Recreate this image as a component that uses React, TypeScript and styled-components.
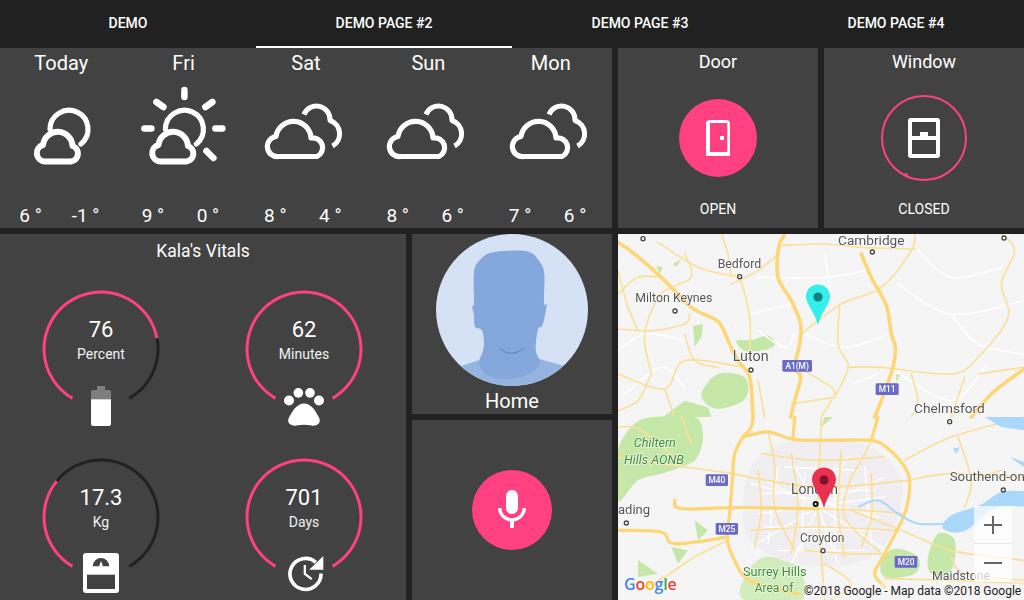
import React from "react";
import styled, { createGlobalStyle } from "styled-components";

const Global = createGlobalStyle`
  html, body { margin: 0; padding: 0; background: #212121; }
  body { font-family: Roboto, "Liberation Sans", sans-serif; color: #fff; width: 1024px; height: 600px; overflow: hidden; }
  * { box-sizing: border-box; }
`;

const PINK = "#ff4081";
const PANEL = "#424242";
const DARK = "#212121";

const Page = styled.div`
  width: 1024px;
  height: 600px;
  display: flex;
  flex-direction: column;
  background: ${DARK};
  overflow: hidden;
`;
const TabBar = styled.nav`
  height: 48px;
  display: grid;
  grid-template-columns: repeat(4, 256px);
  flex: none;
`;
const Tab = styled.div<{ $active?: boolean }>`
  display: flex;
  align-items: center;
  justify-content: center;
  font-size: 14px;
  font-weight: 500;
  color: #fff;
  text-transform: uppercase;
  border-bottom: 2px solid ${(p) => (p.$active ? "#fff" : "transparent")};
`;
const Grid = styled.main`
  flex: 1;
  display: grid;
  grid-template-columns: 406px 200px 200px 200px;
  grid-template-rows: 180px 180px 180px;
  gap: 6px;
`;
const Panel = styled.section`
  background: ${PANEL};
  overflow: hidden;
`;
const WeatherPanel = styled(Panel)`
  grid-column: 1 / 3;
  display: grid;
  grid-template-columns: repeat(5, 122.4px);
`;
const Day = styled.div`
  display: flex;
  flex-direction: column;
  align-items: center;
`;
const DayName = styled.div`
  height: 30px;
  line-height: 30px;
  font-size: 20px;
  font-weight: 400;
`;
const WeatherIcon = styled.svg`
  width: 90px;
  height: 84px;
  margin-top: 6px;
  display: block;
`;
const Temps = styled.div`
  align-self: stretch;
  display: flex;
  padding-left: 3px;
  margin-top: 36px;
`;
const Temp = styled.span`
  width: 55px;
  text-align: center;
  line-height: 24px;
  font-size: 19px;
  font-weight: 400;
`;
const SwitchPanel = styled(Panel)`
  display: flex;
  flex-direction: column;
  align-items: center;
`;
const SwitchTitle = styled.div`
  height: 28px;
  line-height: 28px;
  font-size: 18px;
  font-weight: 400;
`;
const SwitchButton = styled.div<{ $on?: boolean }>`
  width: ${(p) => (p.$on ? 78 : 86)}px;
  height: ${(p) => (p.$on ? 78 : 86)}px;
  margin-top: ${(p) => (p.$on ? 23 : 19)}px;
  margin-bottom: ${(p) => (p.$on ? 22 : 18)}px;
  border-radius: 50%;
  display: flex;
  align-items: center;
  justify-content: center;
  position: relative;
  background: ${(p) => (p.$on ? PINK : "transparent")};
  border: ${(p) => (p.$on ? "none" : `2px solid ${PINK}`)};
`;
const RingNub = styled.span`
  position: absolute;
  left: 21px;
  bottom: 2px;
  width: 4px;
  height: 4px;
  border-radius: 50%;
  background: ${PINK};
`;
const SwitchState = styled.div`
  height: 20px;
  line-height: 20px;
  font-size: 14px;
  font-weight: 400;
  text-transform: uppercase;
`;
const VitalsPanel = styled(Panel)`
  grid-column: 1;
  grid-row: 2 / 4;
  display: flex;
  flex-direction: column;
`;
const VitalsTitle = styled.div`
  height: 34px;
  line-height: 34px;
  text-align: center;
  font-size: 17.5px;
  font-weight: 400;
`;
const GaugeGrid = styled.div`
  display: grid;
  grid-template-columns: 120px 120px;
  column-gap: 83px;
  row-gap: 48px;
  padding: 21px 0 0 41px;
`;
const Gauge = styled.div`
  display: grid;
  width: 120px;
  height: 120px;
  position: relative;
`;
const GaugeArc = styled.svg`
  grid-area: 1 / 1;
  width: 120px;
  height: 120px;
  display: block;
`;
const GaugeText = styled.div`
  grid-area: 1 / 1;
  display: flex;
  flex-direction: column;
  align-items: center;
  padding-top: 27px;
`;
const GaugeValue = styled.div`
  font-size: 22px;
  line-height: 28px;
  font-weight: 400;
`;
const GaugeUnit = styled.div`
  font-size: 14px;
  line-height: 20px;
  font-weight: 400;
  color: #f2f2f2;
`;
const GaugeIcon = styled.svg<{ $x: number; $y: number }>`
  position: absolute;
  left: ${(p) => p.$x}px;
  top: ${(p) => p.$y}px;
  display: block;
`;
const HomePanel = styled(Panel)`
  display: flex;
  flex-direction: column;
  align-items: center;
`;
const Avatar = styled.svg`
  width: 152px;
  height: 152px;
  display: block;
  flex: none;
`;
const HomeLabel = styled.div`
  font-size: 20px;
  line-height: 30px;
  font-weight: 400;
`;
const MicPanel = styled(Panel)`
  display: flex;
  align-items: center;
  justify-content: center;
`;
const MicButton = styled.div`
  width: 80px;
  height: 80px;
  border-radius: 50%;
  background: ${PINK};
  display: flex;
  align-items: center;
  justify-content: center;
`;
const MapPanel = styled(Panel)`
  grid-column: 3 / 5;
  grid-row: 2 / 4;
  position: relative;
  background: #f6f5f6;
`;
const MapArt = styled.svg`
  width: 406px;
  height: 366px;
  display: block;
  filter: blur(0.4px);
`;
const Pin = styled.svg<{ $x: number; $y: number }>`
  position: absolute;
  left: ${(p) => p.$x}px;
  top: ${(p) => p.$y}px;
  width: 26px;
  height: 41px;
`;
const ZoomControl = styled.div`
  position: absolute;
  left: 356px;
  top: 272px;
  width: 38px;
  height: 76px;
  background: rgba(255, 255, 255, 0.72);
  border-radius: 2px;
  display: grid;
  grid-template-rows: 1fr 1fr;
`;
const ZoomButton = styled.div<{ $top?: boolean }>`
  display: flex;
  align-items: center;
  justify-content: center;
  border-bottom: ${(p) => (p.$top ? "1px solid #e6e6e6" : "none")};
`;
const GoogleLogo = styled.div`
  position: absolute;
  left: 6px;
  bottom: 7px;
  font-family: "Open Sans", "Liberation Sans", sans-serif;
  font-size: 16px;
  line-height: 18px;
  font-weight: 600;
  letter-spacing: -0.2px;
  text-shadow: 0 0 2px #fff;
`;
const Letter = styled.span<{ $c: string }>`
  color: ${(p) => p.$c};
`;
const Attribution = styled.div`
  position: absolute;
  left: 186px;
  bottom: 1px;
  width: 220px;
  overflow: hidden;
  white-space: nowrap;
  font-size: 12px;
  line-height: 16px;
  color: #222;
  background: rgba(245, 245, 245, 0.45);
`;

/* ---------- weather drawings ---------- */
const smallCloud = "M45 161.5A8.4 8.4 0 0 1 43 145A14.8 14.8 0 0 1 72.5 146A8 8 0 0 1 71 161.5Z";
const stroke = { fill: "none", stroke: "#fff", strokeLinecap: "round" as const, strokeLinejoin: "round" as const };

const SunAndCloud = () => (
  <>
    <path d="M50 129A19 19 0 1 1 81 144" {...stroke} strokeWidth={5.2} />
    <path d={smallCloud} {...stroke} strokeWidth={6} />
  </>
);
const PartlyCloudy = () => (
  <WeatherIcon viewBox="16 84 90 84">
    <SunAndCloud />
  </WeatherIcon>
);
const SunCloud = () => (
  <WeatherIcon viewBox="23.6 84 90 84">
    <SunAndCloud />
    <g {...stroke} strokeWidth={6.5}>
      <path d="M69 90V97" />
      <path d="M29 128.5H36" />
      <path d="M100 128.5H107" />
      <path d="M41 102L48 107" />
      <path d="M97 102L90 107" />
      <path d="M91 151L98 158" />
    </g>
  </WeatherIcon>
);
const Clouds = () => (
  <WeatherIcon viewBox="261 84 90 84">
    <path d="M279 156.5A10 10 0 0 1 276 136.5A17.6 17.6 0 0 1 311 138A9.8 9.8 0 0 1 317 156.5Z" {...stroke} strokeWidth={5.2} />
    <path d="M304 114.5A13.5 13.5 0 0 1 330 120.5A14 14 0 0 1 332.5 146" {...stroke} strokeWidth={5} strokeLinecap="butt" />
  </WeatherIcon>
);

const days = [
  { name: "Today", icon: <PartlyCloudy />, hi: "6 °", lo: "-1 °" },
  { name: "Fri", icon: <SunCloud />, hi: "9 °", lo: "0 °" },
  { name: "Sat", icon: <Clouds />, hi: "8 °", lo: "4 °" },
  { name: "Sun", icon: <Clouds />, hi: "8 °", lo: "6 °" },
  { name: "Mon", icon: <Clouds />, hi: "7 °", lo: "6 °" },
];

/* ---------- gauges ---------- */
const CX = 60;
const CY = 60;
const R = 57;
const polar = (deg: number) => {
  const a = (deg * Math.PI) / 180;
  return [CX - R * Math.sin(a), CY + R * Math.cos(a)];
};
const arc = (from: number, to: number) => {
  const [x1, y1] = polar(from);
  const [x2, y2] = polar(to);
  return `M${x1.toFixed(2)} ${y1.toFixed(2)}A${R} ${R} 0 ${to - from > 180 ? 1 : 0} 1 ${x2.toFixed(2)} ${y2.toFixed(2)}`;
};
const VitalGauge = ({ value, unit, end, children }: { value: string; unit: string; end: number; children: React.ReactNode }) => (
  <Gauge>
    <GaugeArc viewBox="0 0 120 120">
      {end < 330 && <path d={arc(end, 330)} fill="none" stroke={DARK} strokeWidth={3} />}
      <path d={arc(30, end)} fill="none" stroke={PINK} strokeWidth={3} />
    </GaugeArc>
    <GaugeText>
      <GaugeValue>{value}</GaugeValue>
      <GaugeUnit>{unit}</GaugeUnit>
    </GaugeText>
    {children}
  </Gauge>
);

/* ---------- map ---------- */
const smooth = (d: string, closed = false) => {
  const n = (d.match(/-?\d+(\.\d+)?/g) || []).map(Number);
  const pts: number[][] = [];
  for (let i = 0; i < n.length; i += 2) pts.push([n[i], n[i + 1]]);
  const at = (i: number) => (closed ? pts[(i + pts.length) % pts.length] : pts[Math.max(0, Math.min(pts.length - 1, i))]);
  let out = `M${pts[0][0]} ${pts[0][1]}`;
  const count = closed ? pts.length : pts.length - 1;
  for (let i = 0; i < count; i++) {
    const [p0, p1, p2, p3] = [at(i - 1), at(i), at(i + 1), at(i + 2)];
    const c1 = [p1[0] + (p2[0] - p0[0]) / 6, p1[1] + (p2[1] - p0[1]) / 6];
    const c2 = [p2[0] - (p3[0] - p1[0]) / 6, p2[1] - (p3[1] - p1[1]) / 6];
    out += `C${c1[0].toFixed(1)} ${c1[1].toFixed(1)} ${c2[0].toFixed(1)} ${c2[1].toFixed(1)} ${p2[0]} ${p2[1]}`;
  }
  return closed ? out + "Z" : out;
};
const major = [
  "M0 25L50 60L130 130L220 220L300 262L330 320L360 380L395 430L405 549",
  "M500 0L482 40L480 130L520 200L548 270L545 330L530 400L548 430L530 500L518 549",
  "M730 60L760 130L805 215L820 300L832 340L825 400L790 500L770 549",
  "M1218 405L1170 440L1120 480L1060 549",
];
const minor = [
  "M0 285L100 290L200 270L215 240",
  "M482 35L620 30L730 40L890 45",
  "M340 150L420 110L480 60",
  "M120 25L240 100L340 125",
  "M310 0L330 60L340 125L365 130L395 250L395 350",
  "M380 400L200 380L140 465L0 420",
  "M550 300L670 210L790 160L880 50L890 0",
  "M665 210L660 330L690 390L680 430L650 490",
  "M690 400L790 400L1000 420L1080 370L1170 250L1150 150L1190 50L1150 0",
  "M650 490L520 510",
  "M540 400L640 460L650 490",
  "M200 300L230 380L300 400",
  "M0 110L30 220L60 290",
  "M140 465L170 549",
  "M1218 400L1080 420",
  "M200 60L220 130L130 180L80 300L100 420",
  "M0 180L60 130L130 130",
  "M100 420L60 500L0 530",
  "M420 440L440 549",
  "M610 549L640 500",
  "M1040 430L1000 549",
  "M880 420L900 500L880 549",
];
const white = [
  "M420 130L620 130L740 110",
  "M560 300L680 340L820 300",
  "M840 150L1000 240L1218 200",
  "M1000 240L1080 330L1218 360",
  "M830 410L1000 500L1100 400",
  "M620 60L640 180",
  "M400 240L520 210",
  "M700 450L780 420",
  "M20 480L130 400L200 460",
  "M900 50L1000 130L1150 100",
  "M0 350L80 300L200 320",
  "M420 290L500 340L530 300",
];
const lowerMajor = [
  "M375 60L450 45L530 68L640 70L760 70L810 95L860 150L875 200L860 290L800 410L770 470L800 510",
  "M375 60L350 110L343 190L335 290L327 360L345 420L395 490L540 530",
  "M760 70L780 0",
  "M170 250L190 275L350 272L600 275",
  "M0 340L130 345L170 380L330 360",
  "M405 0L400 30L375 60",
  "M530 0L525 68",
];
const lowerMinor = [
  "M0 120L100 135L200 150L350 170",
  "M330 370L230 420L140 480L60 520",
  "M610 0L605 120L600 270",
  "M760 70L730 130L700 180",
  "M600 280L610 420L620 549",
  "M860 130L1000 60L1218 0",
  "M870 190L1000 170L1218 180",
  "M700 280L850 340L1000 400L1218 430",
  "M800 485L1000 490L1218 500",
  "M600 275L730 280L860 290",
  "M340 170L600 210L870 190",
  "M450 40L470 150L470 275L530 400",
  "M700 180L680 300L790 410",
  "M1020 60L1060 190L1040 270",
  "M1000 420L1040 470L1218 490",
  "M0 30L70 40L200 150",
  "M190 0L220 80",
  "M560 400L690 410L820 410",
  "M420 160L430 280L410 390",
  "M520 110L540 270L520 410",
  "M670 100L660 280L680 420",
  "M760 170L760 300L730 390",
  "M400 340L600 330L830 340",
  "M430 110L600 130L800 120",
  "M620 440L700 500L640 549",
  "M1060 190L1150 160",
];
const cityStreets = [
  "M600 270L420 180", "M600 270L520 130", "M600 270L690 120", "M600 270L800 180", "M600 270L830 290",
  "M600 270L790 390", "M600 270L660 440", "M600 270L520 440", "M600 270L400 390", "M600 270L360 280",
  "M430 230L770 220", "M440 330L780 340", "M500 150L720 160", "M480 400L740 400", "M480 150L450 380", "M740 150L760 390",
  "M560 170L550 400", "M650 150L650 410", "M420 290L800 240", "M400 200L780 300",
];
const MapLabel = styled.text<{ $green?: boolean; $size?: number }>`
  font-family: Roboto, "Liberation Sans", sans-serif;
  font-size: ${(p) => p.$size ?? 37}px;
  fill: ${(p) => (p.$green ? "#3d8b3d" : "#555")};
  paint-order: stroke;
  stroke: #fff;
  stroke-width: 4px;
  stroke-opacity: 0.75;
`;
const Shield = ({ x, y, w, t }: { x: number; y: number; w: number; t: string }) => (
  <g>
    <rect x={x} y={y} width={w} height={35} rx={4} fill="#6a6ac8" />
    <text x={x + w / 2} y={y + 26} textAnchor="middle" fontFamily="Roboto, sans-serif" fontWeight={500} fontSize={25} fill="#fff">
      {t}
    </text>
  </g>
);
const Town = ({ x, y, big }: { x: number; y: number; big?: boolean }) => (
  <circle cx={x} cy={y} r={6} fill="#fff" stroke={big ? "#111" : "#444"} strokeWidth={big ? 6 : 4} />
);

const MapPicture = () => (
  <MapArt viewBox="0 0 1218 1098">
    <g fill="#c5e8a8">
      <path d={smooth("M355 320L400 318L450 305L472 330L440 348L380 350", true)} />
      <path d={smooth("M250 480L300 420L380 430L385 490L330 520L280 520", true)} />
      <path d="M135 549L200 500L270 520L280 549Z" />
      <path d="M225 275L255 270L250 310L230 338Z" />
      <path d="M165 90L190 75L175 100Z" />
      <path d="M115 95L135 100L125 120Z" />
      <path d="M835 420L848 422L835 445Z" />
    </g>
    <g fill="none" strokeLinejoin="round" strokeLinecap="round">
      {white.map((d) => <path key={d} d={smooth(d)} stroke="#fff" strokeWidth={5} />)}
      {minor.map((d) => <path key={d} d={smooth(d)} stroke="#fbe09a" strokeWidth={5} />)}
      {major.map((d) => <path key={d} d={smooth(d)} stroke="#fdd777" strokeWidth={11} />)}
    </g>
    <g transform="translate(0 549)">
      <g fill="#c5e8a8">
        <path d={smooth("M0 100L50 20L110 0L230 0L255 60L235 125L190 150L130 170L60 190L0 250", true)} />
        <path d={smooth("M790 430L830 395L900 420L890 470L800 480", true)} />
        <path d={smooth("M930 420L960 350L1010 370L1000 460L940 470", true)} />
        <path d={smooth("M380 480L440 420L540 450L550 549L380 549", true)} opacity={0.75} />
        <path d="M160 390L210 400L180 440Z" />
        <path d="M230 310L270 340L240 370Z" />
        <path d="M60 430L120 470L60 480Z" />
        <path d="M620 0L645 0L610 30Z" />
        <path d="M700 110L730 85L710 130Z" />
        <path d="M480 330L510 320L490 350Z" />
      </g>
      <path d={smooth("M390 170L470 90L620 60L760 90L850 190L830 330L760 420L620 450L470 420L380 340", true)} fill="#f0eef1" />
      <g fill="none" strokeLinecap="round" strokeLinejoin="round">
        {cityStreets.map((d) => <path key={d} d={d} stroke="#fff" strokeWidth={4} />)}
        {lowerMinor.map((d) => <path key={d} d={smooth(d)} stroke="#fbdf96" strokeWidth={5} />)}
        {lowerMajor.map((d) => <path key={d} d={smooth(d)} stroke="#fdd777" strokeWidth={10} />)}
      </g>
      <g fill="#a9d8fb">
        <path d={smooth("M1218 222L1150 225L1085 265L1000 295L975 335L1040 342L1130 275L1218 268")} />
        <path d="M1100 0L1218 0L1218 40L1150 30Z" />
        <path d="M1175 120L1218 135L1218 150Z" />
        <path d="M1005 95L1025 90L1015 110Z" />
      </g>
      <path d={smooth("M720 270L780 250L840 290L900 320L990 320")} fill="none" stroke="#a9d8fb" strokeWidth={6} />
    </g>

    <MapLabel x="660" y="32" $size={41}>Cambridge</MapLabel>
    <MapLabel x="299" y="103">Bedford</MapLabel>
    <MapLabel x="52" y="205">Milton Keynes</MapLabel>
    <MapLabel x="344" y="381" $size={43}>Luton</MapLabel>
    <MapLabel x="888" y="536" $size={41}>Chelmsford</MapLabel>
    <Town x={75} y={14} /><Town x={763} y={54} /><Town x={365} y={128} /><Town x={171} y={231} /><Town x={399} y={408} /><Town x={1158} y={12} /><Town x={995} y={563} />
    <Shield x={493} y={378} w={89} t="A1(M)" />
    <Shield x={773} y={448} w={69} t="M11" />

    <g transform="translate(0 549)">
      <MapLabel x="47" y="91" $green $size={38} fontStyle="italic">Chiltern</MapLabel>
      <MapLabel x="18" y="140" $green $size={38} fontStyle="italic">Hills AONB</MapLabel>
      <MapLabel x="519" y="231" $size={42}>London</MapLabel>
      <MapLabel x="995" y="192" $size={40}>Southend-on</MapLabel>
      <MapLabel x="0" y="291" $size={39}>ading</MapLabel>
      <MapLabel x="546" y="376" $size={36}>Croydon</MapLabel>
      <MapLabel x="375" y="476" $green $size={38}>Surrey Hills</MapLabel>
      <MapLabel x="410" y="525" $green $size={36}>Area of</MapLabel>
      <MapLabel x="942" y="490" $size={37}>Maidstone</MapLabel>
      <Shield x={263} y={172} w={67} t="M40" />
      <Shield x={293} y={318} w={67} t="M25" />
      <Shield x={830} y={417} w={68} t="M20" />
      <Town x={1156} y={219} /><Town x={25} y={318} /><Town x={615} y={401} />
      <Town x={593} y={261} big />
    </g>
  </MapArt>
);

const MarkerPin = ({ x, y, body, dot }: { x: number; y: number; body: string; dot: string }) => (
  <Pin $x={x} $y={y} viewBox="0 0 26 41">
    <path d="M13 0.5C19.8 0.5 25 5.8 25 12.6C25 20 17 27 13 41C9 27 1 20 1 12.6C1 5.8 6.2 0.5 13 0.5Z" fill={body} />
    <circle cx="13" cy="13" r="4.6" fill={dot} />
  </Pin>
);

const headPath = smooth(
  "M192 110L210 75L240 54L300 47L360 52L392 85L403 120L402 205L410 208L403 250L395 275L385 280L378 320L378 350L388 375L385 395L350 420L300 432L250 428L215 405L208 378L218 350L222 320L215 285L195 275L192 240L186 212L192 205",
  true
);

export default function App() {
  return (
    <Page>
      <Global />
      <TabBar>
        <Tab>Demo</Tab>
        <Tab $active>Demo page #2</Tab>
        <Tab>Demo page #3</Tab>
        <Tab>Demo page #4</Tab>
      </TabBar>
      <Grid>
        <WeatherPanel>
          {days.map((d) => (
            <Day key={d.name}>
              <DayName>{d.name}</DayName>
              {d.icon}
              <Temps>
                <Temp>{d.hi}</Temp>
                <Temp>{d.lo}</Temp>
              </Temps>
            </Day>
          ))}
        </WeatherPanel>
        <SwitchPanel>
          <SwitchTitle>Door</SwitchTitle>
          <SwitchButton $on>
            <svg width="24" height="36" viewBox="0 0 24 36">
              <path d="M0 36V4Q0 0 4 0H20Q24 0 24 4V36ZM4 32H21.3V3H4Z" fill="#fff" fillRule="evenodd" />
              <rect x="14" y="16" width="4" height="4" fill="#fff" />
            </svg>
          </SwitchButton>
          <SwitchState>Open</SwitchState>
        </SwitchPanel>
        <SwitchPanel>
          <SwitchTitle>Window</SwitchTitle>
          <SwitchButton>
            <svg width="32" height="40" viewBox="0 0 32 40">
              <path d="M3 0H29Q32 0 32 3V37Q32 40 29 40H3Q0 40 0 37V3Q0 0 3 0ZM4 4V18H12V14H20V18H28V4ZM4 22V36H28V22Z" fill="#fff" fillRule="evenodd" />
            </svg>
            <RingNub />
          </SwitchButton>
          <SwitchState>Closed</SwitchState>
        </SwitchPanel>
        <VitalsPanel>
          <VitalsTitle>Kala's Vitals</VitalsTitle>
          <GaugeGrid>
            <VitalGauge value="76" unit="Percent" end={259}>
              <GaugeIcon $x={50} $y={97} width="20" height="40" viewBox="0 0 20 40">
                <path d="M6 0H14V4H18Q20 4 20 6V13.3H0V6Q0 4 2 4H6Z" fill="#fff" opacity={0.32} />
                <path d="M0 13.3H20V38Q20 40 18 40H2Q0 40 0 38Z" fill="#fff" />
              </GaugeIcon>
            </VitalGauge>
            <VitalGauge value="62" unit="Minutes" end={330}>
              <GaugeIcon $x={40} $y={99} width="40" height="38" viewBox="852 457 120 113">
                <g fill="#fff">
                  <circle cx="867" cy="494" r="15" />
                  <circle cx="895" cy="471" r="14.5" />
                  <circle cx="930" cy="471" r="14.5" />
                  <circle cx="957" cy="494" r="15" />
                  <path d="M912 503C935 503 948 528 957 545C965 562 950 572 935 569Q912 564 889 569C874 572 858 562 867 545C876 528 890 503 912 503Z" />
                </g>
              </GaugeIcon>
            </VitalGauge>
            <VitalGauge value="17.3" unit="Kg" end={129}>
              <GaugeIcon $x={42} $y={96} width="36" height="40" viewBox="0 0 36 40">
                <rect width="36" height="40" rx="3" fill="#fff" />
                <rect x="4" y="21.7" width="28" height="14.3" fill={PANEL} />
                <path d="M9.7 13.3A8.3 8.3 0 0 1 26.3 13.3Z" fill={PANEL} />
                <path d="M18 8L20 13.3H16Z" fill="#fff" />
              </GaugeIcon>
            </VitalGauge>
            <VitalGauge value="701" unit="Days" end={330}>
              <GaugeIcon $x={42} $y={98} width="38" height="37" viewBox="855 955 115 112">
                <path d="M961 1011A47 47 0 1 1 945 977" fill="none" stroke="#fff" strokeWidth="11" />
                <path d="M968 958V1000H925Z" fill="#fff" />
                <path d="M912 985V1012L933 1028" fill="none" stroke="#fff" strokeWidth="7" />
              </GaugeIcon>
            </VitalGauge>
          </GaugeGrid>
        </VitalsPanel>
        <HomePanel>
          <Avatar viewBox="78 -3 456 456">
            <defs>
              <clipPath id="avatar-clip">
                <circle cx="306" cy="225" r="228" />
              </clipPath>
            </defs>
            <g clipPath="url(#avatar-clip)">
              <rect x="78" y="-3" width="456" height="456" fill="#d5e1f4" />
              <path d="M155 392L210 375L388 372L460 392L460 460H155Z" fill="#95b4e2" />
              <path d={headPath} fill="#84a8dc" />
              <path d="M268 340Q305 372 342 338" fill="none" stroke="#3f6cb4" strokeWidth="2" />
            </g>
          </Avatar>
          <HomeLabel>Home</HomeLabel>
        </HomePanel>
        <MapPanel>
          <MapPicture />
          <MarkerPin x={186.5} y={50} body="#33efea" dot="#117f80" />
          <MarkerPin x={192.5} y={233} body="#e8304f" dot="#7c1128" />
          <ZoomControl>
            <ZoomButton $top>
              <svg width="18" height="18" viewBox="0 0 18 18"><path d="M8 0H10V8H18V10H10V18H8V10H0V8H8Z" fill="#666" /></svg>
            </ZoomButton>
            <ZoomButton>
              <svg width="18" height="18" viewBox="0 0 18 18"><path d="M0 8H18V10H0Z" fill="#666" /></svg>
            </ZoomButton>
          </ZoomControl>
          <GoogleLogo>
            <Letter $c="#4285f4">G</Letter>
            <Letter $c="#ea4335">o</Letter>
            <Letter $c="#fbbc05">o</Letter>
            <Letter $c="#4285f4">g</Letter>
            <Letter $c="#34a853">l</Letter>
            <Letter $c="#ea4335">e</Letter>
          </GoogleLogo>
          <Attribution>©2018 Google - Map data ©2018 Google</Attribution>
        </MapPanel>
        <MicPanel>
          <MicButton>
            <svg width="48" height="48" viewBox="0 0 24 24">
              <path fill="#fff" d="M12 14c1.66 0 2.99-1.34 2.99-3L15 5c0-1.66-1.34-3-3-3S9 3.34 9 5v6c0 1.66 1.34 3 3 3zm5.3-3c0 3-2.54 5.1-5.3 5.1S6.7 14 6.7 11H5c0 3.41 2.72 6.23 6 6.72V21h2v-3.28c3.28-.48 6-3.3 6-6.72h-1.7z" />
            </svg>
          </MicButton>
        </MicPanel>
      </Grid>
    </Page>
  );
}
